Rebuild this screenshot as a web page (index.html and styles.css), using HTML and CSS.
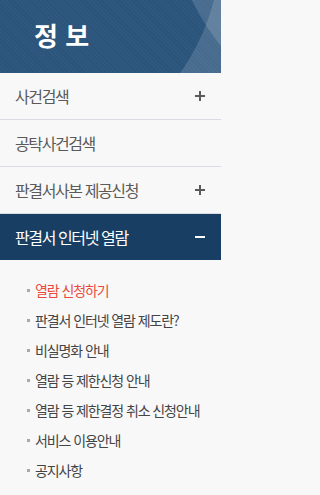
FILE: index.html
```html
<!DOCTYPE html>
<html lang="ko">
<head>
<meta charset="utf-8">
<title>정보</title>
<link rel="stylesheet" href="styles.css">
</head>
<body>
<div class="side">
  <header class="hd">
    <svg class="hd-deco" viewBox="0 0 221 73" preserveAspectRatio="none" aria-hidden="true">
      <path fill="#ffffff" fill-opacity="0.14" fill-rule="evenodd" d="M0 0H221V73H0Z M-221 -55a221 221 0 1 0 442 0a221 221 0 1 0 -442 0Z"/>
      <circle cx="400" cy="-100" r="231" fill="#ffffff" fill-opacity="0.14"/>
    </svg>
    <h2 class="hd-title">정 보</h2>
  </header>
  <ul class="menu">
    <li class="menu-item"><a class="menu-link" href="#">사건검색<span class="ico ico-plus"></span></a></li>
    <li class="menu-item"><a class="menu-link" href="#">공탁사건검색</a></li>
    <li class="menu-item"><a class="menu-link" href="#">판결서사본 제공신청<span class="ico ico-plus"></span></a></li>
    <li class="menu-item is-open"><a class="menu-link" href="#">판결서 인터넷 열람<span class="ico ico-minus"></span></a>
      <ul class="sub">
        <li class="sub-item is-current"><a href="#">열람 신청하기</a></li>
        <li class="sub-item"><a href="#">판결서 인터넷 열람 제도란?</a></li>
        <li class="sub-item"><a href="#">비실명화 안내</a></li>
        <li class="sub-item"><a href="#">열람 등 제한신청 안내</a></li>
        <li class="sub-item"><a href="#">열람 등 제한결정 취소 신청안내</a></li>
        <li class="sub-item"><a href="#">서비스 이용안내</a></li>
        <li class="sub-item"><a href="#">공지사항</a></li>
      </ul>
    </li>
  </ul>
</div>
</body>
</html>
```

FILE: styles.css
```css
* { box-sizing: border-box; }
html, body { margin: 0; padding: 0; }
body {
  background: #f8f8f8;
  font-family: "Noto Sans CJK KR", "Noto Sans", sans-serif;
}
a { text-decoration: none; color: inherit; }
ul { list-style: none; margin: 0; padding: 0; }

.side { width: 221px; background: #f8f8f8; }

.hd {
  position: relative;
  height: 73px;
  overflow: hidden;
  background-color: #2e5880;
  background-image: repeating-linear-gradient(45deg, rgba(0,0,0,0.07) 0 1px, rgba(0,0,0,0) 1px 3px);
  display: flex;
  align-items: center;
  padding: 0 0 4px 34px;
}
.hd-deco {
  position: absolute;
  left: 0; top: 0;
  width: 221px; height: 73px;
}
.hd-title {
  position: relative;
  margin: 0;
  color: #ffffff;
  font-size: 26px;
  font-weight: 700;
  line-height: 1;
  letter-spacing: 0;
}

.menu-item { border-bottom: 1px solid #d9dde3; }
.menu-link {
  display: flex;
  align-items: center;
  justify-content: space-between;
  height: 46px;
  padding: 0 16px 0 15px;
  font-size: 16px;
  letter-spacing: -1.4px;
  color: #5a5a5a;
  background: #f8f8f8;
}
.is-open > .menu-link {
  background: #183e63;
  color: #ffffff;
}

.ico { position: relative; width: 10px; height: 10px; flex: none; }
.ico::before, .ico::after {
  content: "";
  position: absolute;
  background: #5a5a5a;
}
.ico::before { left: 0; top: 4px; width: 10px; height: 2px; }
.ico-plus::after { left: 4px; top: 0; width: 2px; height: 10px; }
.ico-minus::before { background: #ffffff; }
.ico-minus::after { display: none; }

.sub {
  padding: 15px 0 20px 27px;
  background: #f8f8f8;
}
.sub-item {
  display: flex;
  align-items: center;
  height: 30px;
  font-size: 14px;
  letter-spacing: -1.1px;
  color: #444444;
}
.sub-item::before {
  content: "";
  width: 3px;
  height: 3px;
  background: #aaaaaa;
  margin-right: 5px;
  flex: none;
}
.sub-item.is-current { color: #ea4a3d; }
```
